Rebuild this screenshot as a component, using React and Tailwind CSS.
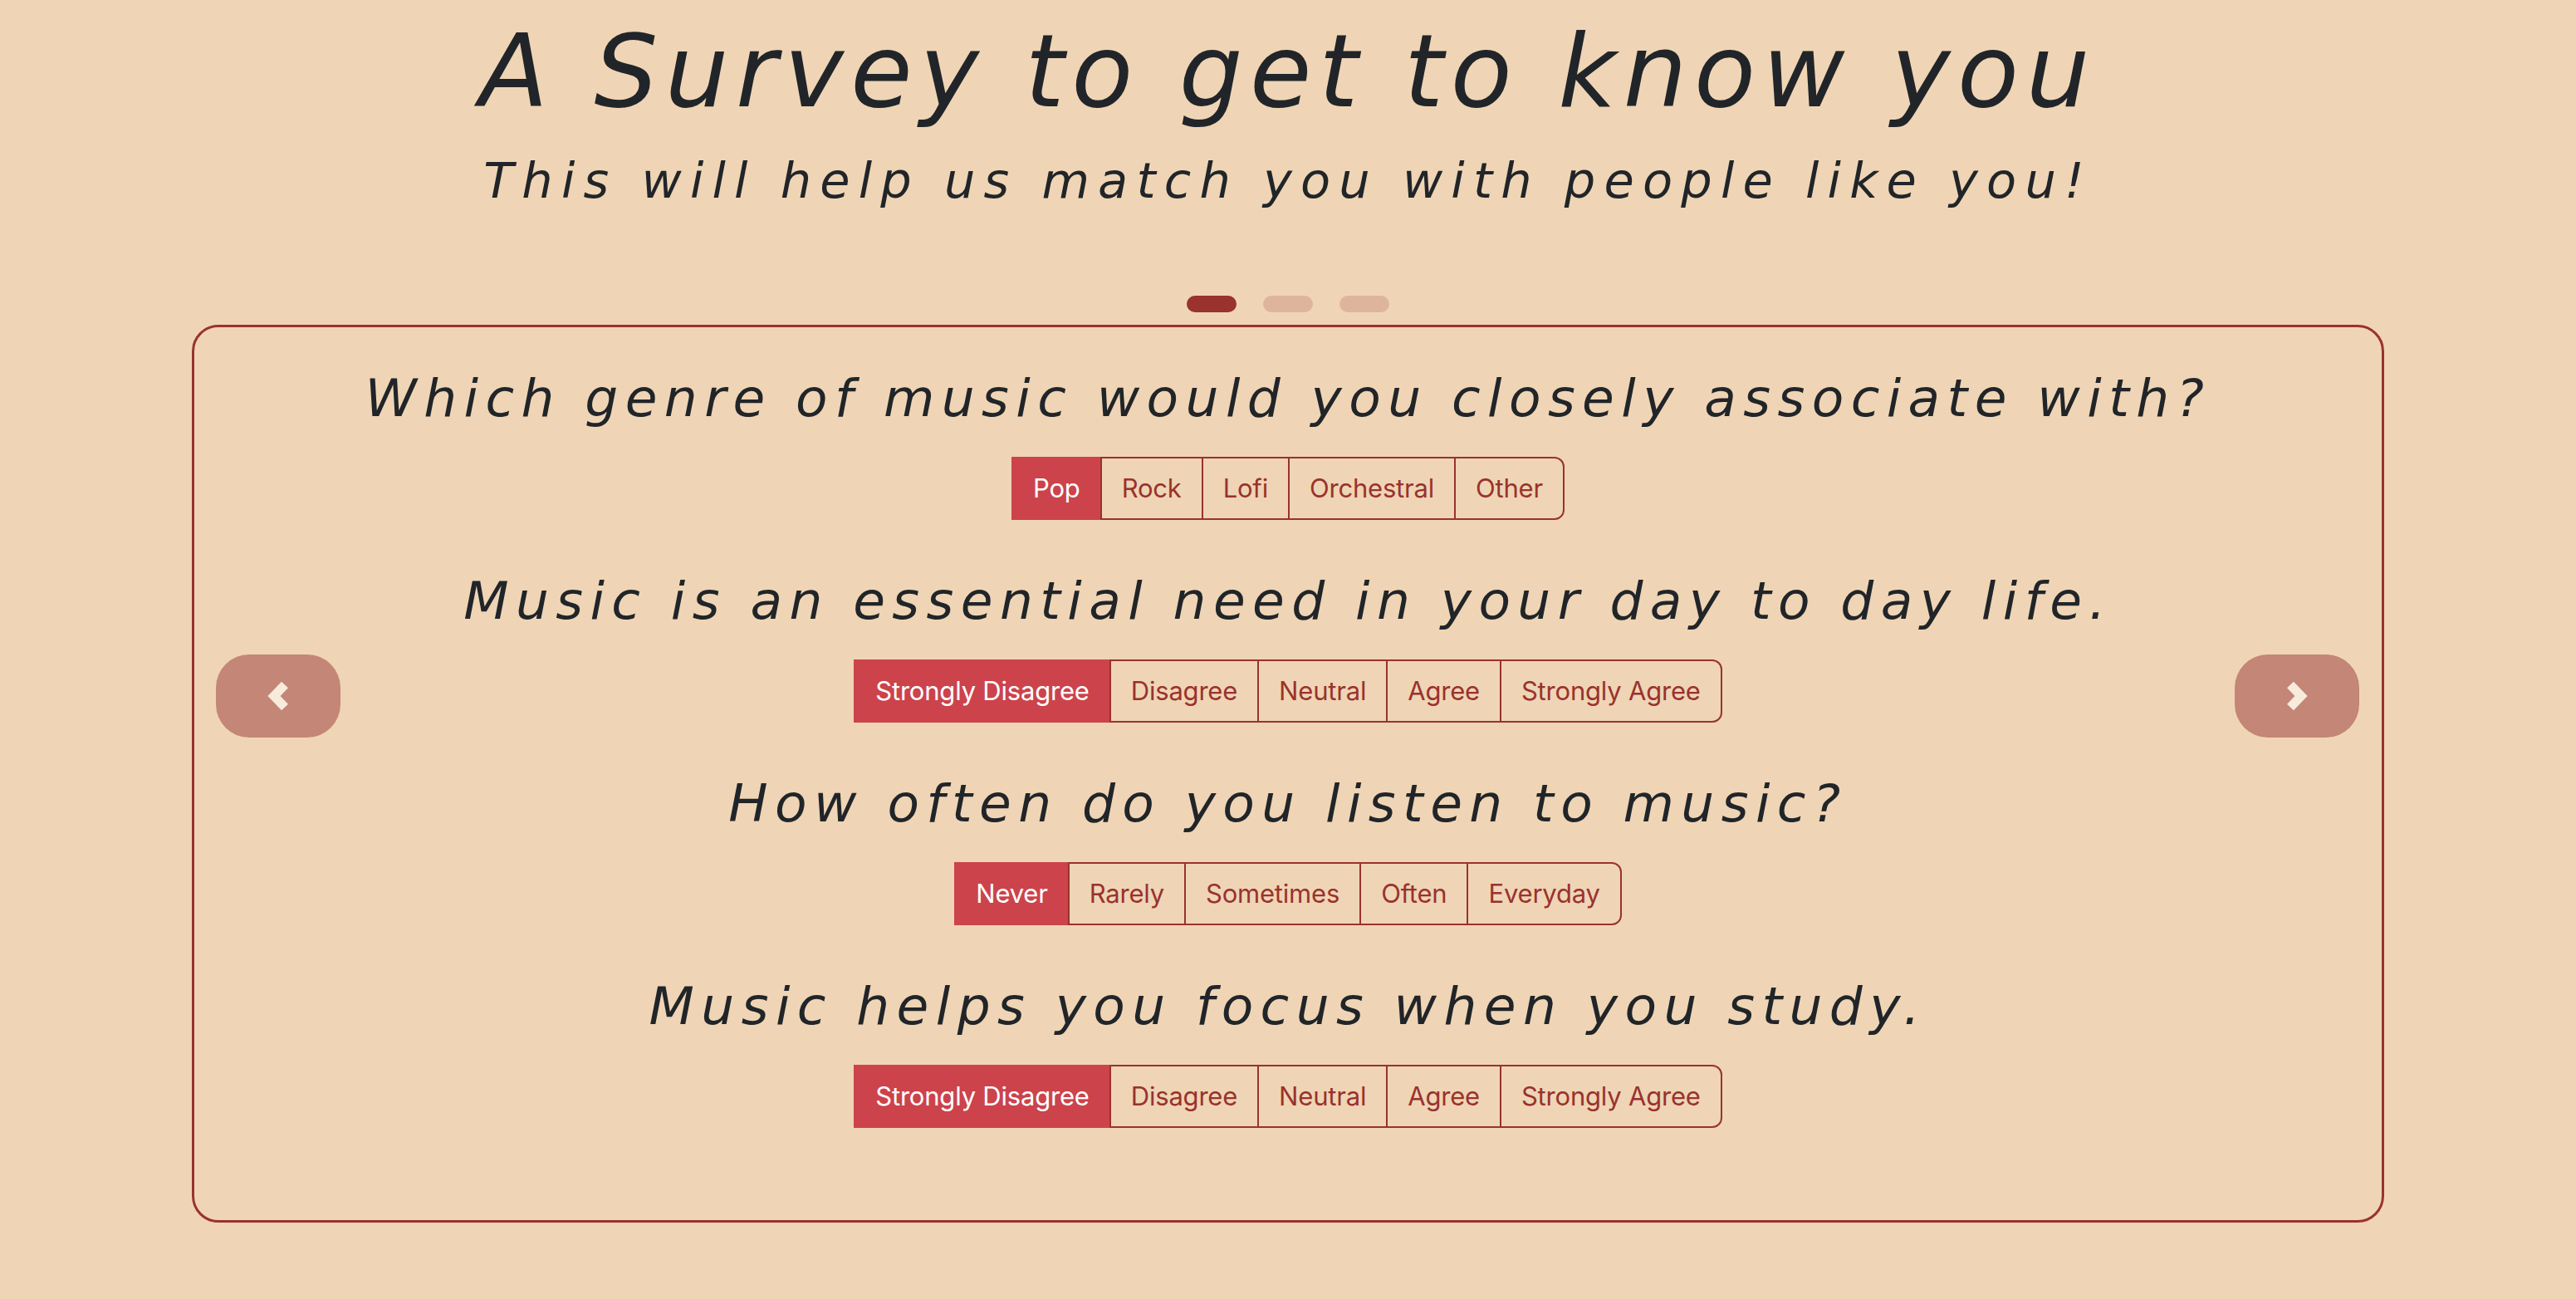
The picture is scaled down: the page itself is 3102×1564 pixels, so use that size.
import React, { useState } from "react";

const questions = [
  {
    text: "Which genre of music would you closely associate with?",
    options: ["Pop", "Rock", "Lofi", "Orchestral", "Other"],
  },
  {
    text: "Music is an essential need in your day to day life.",
    options: ["Strongly Disagree", "Disagree", "Neutral", "Agree", "Strongly Agree"],
  },
  {
    text: "How often do you listen to music?",
    options: ["Never", "Rarely", "Sometimes", "Often", "Everyday"],
  },
  {
    text: "Music helps you focus when you study.",
    options: ["Strongly Disagree", "Disagree", "Neutral", "Agree", "Strongly Agree"],
  },
];

function Chevron({ dir }) {
  const pts = dir === "left" ? "21,6.5 8,20 21,33.5" : "5,6.5 18,20 5,33.5";
  return (
    <svg width="26" height="40" viewBox="0 0 26 40" className="overflow-visible">
      <polyline
        points={pts}
        fill="none"
        stroke="#f7ebdc"
        strokeWidth="11"
        strokeLinejoin="miter"
        strokeLinecap="butt"
      />
    </svg>
  );
}

function OptionGroup({ options, value, onChange }) {
  return (
    <div className="flex justify-center">
      {options.map((opt, i) => {
        const active = value === i;
        const last = i === options.length - 1;
        return (
          <button
            key={opt}
            onClick={() => onChange(i)}
            className={`px-6 py-3 text-[31px] leading-[48px] tracking-[-0.2px] border-2 ${
              i > 0 ? "-ml-[2px]" : ""
            } ${last ? "rounded-r-[12px]" : ""} ${
              active
                ? "bg-[#cc434b] border-[#cc434b] text-white relative z-0"
                : "border-[#9a322e] text-[#9a322e] relative z-10"
            }`}
            style={{ fontFamily: "Inter, 'Liberation Sans', sans-serif" }}
          >
            {opt}
          </button>
        );
      })}
    </div>
  );
}

export default function App() {
  const [answers, setAnswers] = useState([0, 0, 0, 0]);
  const [slide, setSlide] = useState(0);

  const setAnswer = (q, v) => {
    const next = [...answers];
    next[q] = v;
    setAnswers(next);
  };

  return (
    <div
      className="min-h-screen w-full bg-[#efd5b5] text-[#212529] pb-[90px]"
      style={{ fontFamily: "'DejaVu Sans', Verdana, sans-serif" }}
    >
      <h1 className="pt-[14px] text-center text-[121px] leading-[145px] italic tracking-[8.5px]">
        A Survey to get to know you
      </h1>
      <p className="mt-[23px] text-center text-[59px] leading-[71px] italic tracking-[10.2px]">
        This will help us match you with people like you!
      </p>

      <div className="mt-[103px] flex justify-center gap-8">
        {[0, 1, 2].map((d) => (
          <button
            key={d}
            onClick={() => setSlide(d)}
            className={`w-[60px] h-[20px] rounded-full ${
              slide === d ? "bg-[#9a322e]" : "bg-[#deb59c]"
            }`}
          />
        ))}
      </div>

      <div className="relative mx-[231px] mt-[15px] border-[3px] border-[#9a322e] rounded-[32px] pt-[48px] pb-[51px]">
        {questions.map((q, qi) => (
          <div key={qi} className="mb-[60px] last:mb-0 flex flex-col items-center">
            <h2 className="text-[63px] leading-[76px] italic tracking-[8.4px] text-center mb-[32px]">
              {q.text}
            </h2>
            <OptionGroup
              options={q.options}
              value={answers[qi]}
              onChange={(v) => setAnswer(qi, v)}
            />
          </div>
        ))}

        <button
          onClick={() => setSlide((slide + 2) % 3)}
          className="absolute left-[26px] top-[394px] w-[150px] h-[100px] rounded-[40px] bg-[#c48676] flex items-center justify-center"
        >
          <Chevron dir="left" />
        </button>
        <button
          onClick={() => setSlide((slide + 1) % 3)}
          className="absolute right-[27px] top-[394px] w-[150px] h-[100px] rounded-[40px] bg-[#c48676] flex items-center justify-center"
        >
          <Chevron dir="right" />
        </button>
      </div>
    </div>
  );
}
